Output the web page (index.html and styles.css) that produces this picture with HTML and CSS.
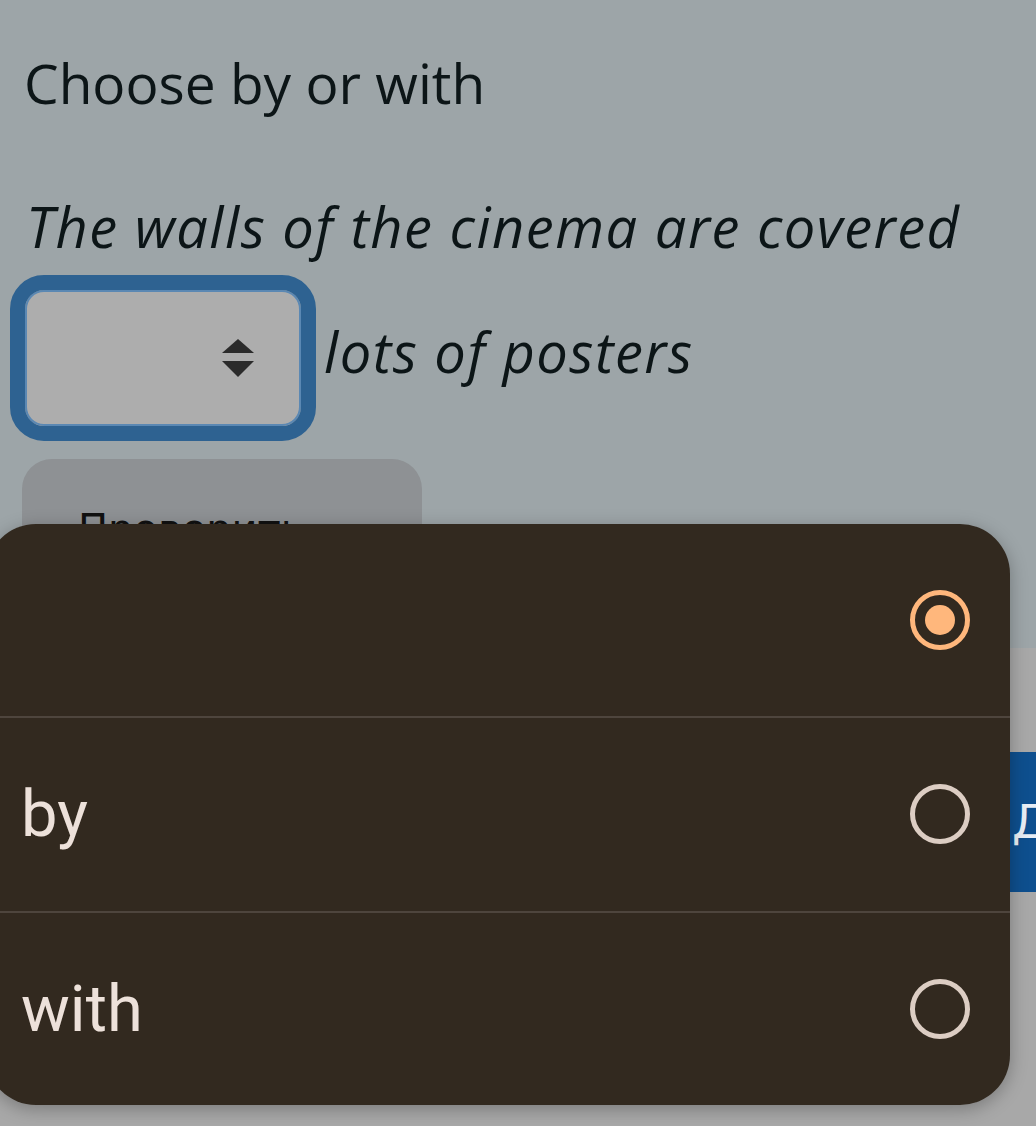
FILE: index.html
```html
<!DOCTYPE html>
<html lang="en">
<head>
<meta charset="utf-8">
<title>Choose by or with</title>
<link rel="stylesheet" href="styles.css">
</head>
<body>
<main class="page">
  <h1 class="title">Choose by or with</h1>
  <p class="sentence">The walls of the cinema are covered <span class="select"><svg class="arrows" width="34" height="42" viewBox="0 0 34 42"><path d="M17 2 L33 16 L1 16 Z" fill="#2b2b2b"/><path d="M1 24 L33 24 L17 40 Z" fill="#2b2b2b"/></svg></span> lots of posters</p>
  <button class="check">Проверить</button>
</main>
<section class="panel">
  <button class="next">Далее</button>
</section>
<div class="sheet" role="listbox">
  <div class="option"><span class="label"></span><span class="radio selected"></span></div>
  <div class="option"><span class="label">by</span><span class="radio"></span></div>
  <div class="option"><span class="label">with</span><span class="radio"></span></div>
</div>
</body>
</html>
```
FILE: styles.css
```css
html, body {
  margin: 0;
  padding: 0;
  background: #9da5a8;
  height: 100%;
  overflow: hidden;
}
.page {
  padding: 38px 0 0 24px;
  font-family: "Open Sans", "Noto Sans", sans-serif;
  color: #0c1517;
}
.title {
  margin: 0;
  font-size: 55px;
  font-weight: 400;
  line-height: 90px;
}
.sentence {
  margin: 66px 0 0 2px;
  font-size: 56px;
  font-style: italic;
  letter-spacing: 1.5px;
  line-height: 64px;
}
.select {
  display: inline-flex;
  align-items: center;
  justify-content: flex-end;
  box-sizing: border-box;
  width: 306px;
  height: 166px;
  margin: 17px -8px 17px -16px;
  padding-right: 46px;
  vertical-align: middle;
  background: #adadad;
  border: 15px solid #2e6291;
  border-radius: 34px;
  box-shadow: inset 0 0 0 2px #5b88b3;
}
.arrows {
  display: block;
}
.check {
  display: block;
  margin: 1px 0 0 -2px;
  width: 400px;
  height: 140px;
  border: 0;
  border-radius: 30px;
  background: #8e9194;
  color: #111;
  font-family: "DejaVu Sans", sans-serif;
  font-size: 40px;
  text-align: left;
  padding: 0 0 0 56px;
}
.panel {
  margin-top: 49px;
  height: 480px;
  background: #a8a8a8;
  display: flex;
  justify-content: flex-end;
  align-items: flex-start;
  padding-top: 104px;
}
.next {
  width: 300px;
  height: 140px;
  margin-right: -274px;
  border: 0;
  background: #0e4f8e;
  color: #e8eef5;
  font-family: "DejaVu Sans", sans-serif;
  font-size: 46px;
  text-align: left;
  padding: 0 0 0 2px;
}
.sheet {
  position: fixed;
  left: -14px;
  top: 524px;
  width: 1024px;
  height: 581px;
  background: #32291f;
  border-radius: 50px;
  box-shadow: 0 4px 18px rgba(0,0,0,0.28);
  display: flex;
  flex-direction: column;
  overflow: hidden;
}
.option {
  flex: 1;
  display: flex;
  align-items: center;
  justify-content: space-between;
  padding: 0 40px 0 35px;
  font-family: "Roboto", sans-serif;
  font-size: 65px;
  color: #ede1da;
}
.option + .option {
  border-top: 2px solid #4e453d;
}
.radio {
  box-sizing: border-box;
  width: 60px;
  height: 60px;
  border-radius: 50%;
  border: 5px solid #dccdc3;
  display: flex;
  align-items: center;
  justify-content: center;
}
.radio.selected {
  border-color: #ffb77c;
}
.radio.selected::after {
  content: "";
  width: 30px;
  height: 30px;
  border-radius: 50%;
  background: #ffb77c;
}
```
